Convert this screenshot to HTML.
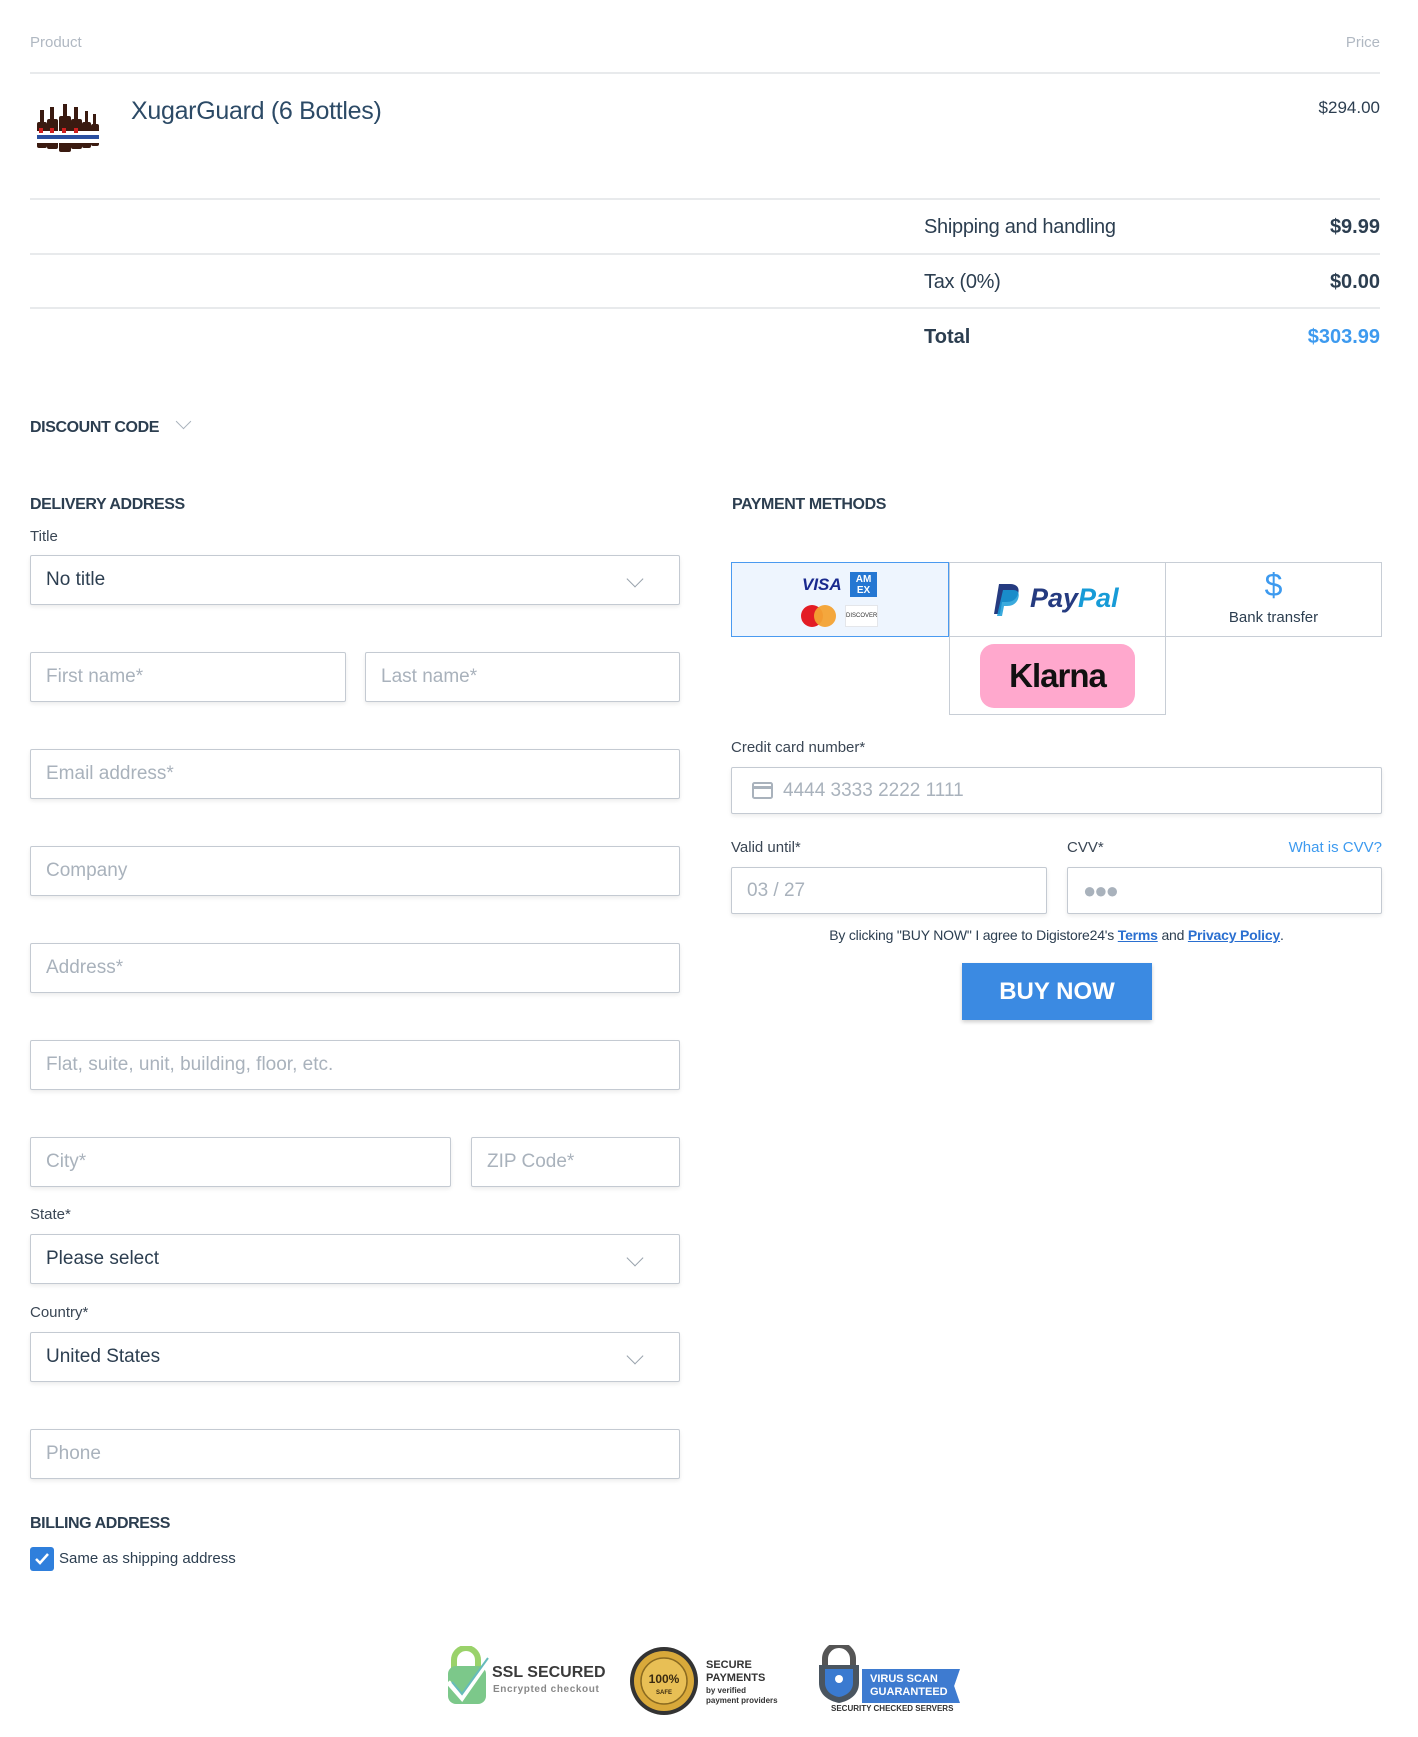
<!DOCTYPE html>
<html><head><meta charset="utf-8"><style>
*{box-sizing:border-box;margin:0;padding:0}
body{width:1418px;height:1737px;position:relative;background:#fff;font-family:"Liberation Sans",Arial,sans-serif;color:#2c3e50;overflow:hidden}
.a{position:absolute}
.hr{position:absolute;left:30px;width:1350px;height:2px;background:#e8eaec}
.h{font-weight:bold;font-size:16px;color:#2c3e50;letter-spacing:-0.4px}
.inp{position:absolute;height:50px;border:1px solid #c4cad2;border-radius:2px;box-shadow:0 2px 4px rgba(0,0,0,.08);font-size:19px;color:#a9b2bc;padding-left:15px;line-height:48px;background:#fff}
.sel{color:#2c3e50}
.chev{position:absolute;right:38px;top:17px;width:12px;height:12px;border-right:1.5px solid #9aa3ad;border-bottom:1.5px solid #9aa3ad;transform:rotate(45deg)}
.lbl{position:absolute;font-size:15px;color:#3a4654}
.tile{position:absolute;border:1px solid #c8ced6;background:#fff}
</style></head><body>
<div class="a" style="left:30px;top:34px;font-size:15px;color:#b0b8c2">Product</div>
<div class="a" style="right:38px;top:34px;font-size:15px;color:#b0b8c2">Price</div>
<div class="hr" style="top:72px"></div>
<svg class="a" style="left:35px;top:104px" width="66" height="54" viewBox="0 0 66 54">
<g fill="#3a1a10"><rect x="2" y="18" width="10" height="26" rx="2"/><rect x="12" y="15" width="11" height="30" rx="2"/><rect x="24" y="12" width="12" height="36" rx="2"/><rect x="36" y="15" width="11" height="30" rx="2"/><rect x="47" y="18" width="9" height="26" rx="2"/><rect x="56" y="20" width="8" height="22" rx="2"/>
<rect x="5" y="6" width="4" height="12"/><rect x="15" y="3" width="4" height="12"/><rect x="28" y="0" width="4" height="12"/><rect x="39" y="3" width="4" height="12"/><rect x="50" y="7" width="3" height="11"/><rect x="58" y="10" width="3" height="10"/></g>
<g fill="#fff"><rect x="2" y="27" width="62" height="12"/></g><g fill="#2a4fa0"><rect x="2" y="31" width="62" height="4"/></g><g fill="#d02020"><rect x="4" y="24" width="4" height="5"/><rect x="15" y="24" width="4" height="5"/><rect x="27" y="24" width="4" height="5"/><rect x="39" y="24" width="4" height="5"/></g></svg>
<div class="a" style="left:131px;top:97px;font-size:25px;color:#2c4a66;letter-spacing:-0.3px">XugarGuard (6 Bottles)</div>
<div class="a" style="right:38px;top:98px;font-size:17px;color:#2c3e50">$294.00</div>
<div class="hr" style="top:198px"></div>
<div class="a" style="left:924px;top:216px;font-size:20px;color:#2c3e50;letter-spacing:-0.3px">Shipping and handling</div>
<div class="a" style="right:38px;top:216px;font-size:20px;font-weight:bold">$9.99</div>
<div class="hr" style="top:253px"></div>
<div class="a" style="left:924px;top:271px;font-size:20px;letter-spacing:-0.3px">Tax (0%)</div>
<div class="a" style="right:38px;top:271px;font-size:20px;font-weight:bold">$0.00</div>
<div class="hr" style="top:307px"></div>
<div class="a" style="left:924px;top:326px;font-size:20px;font-weight:bold">Total</div>
<div class="a" style="right:38px;top:326px;font-size:20px;font-weight:bold;color:#3d9aef">$303.99</div>

<div class="a h" style="left:30px;top:419px">DISCOUNT CODE</div>
<div class="a" style="left:178px;top:416px;width:11px;height:11px;border-right:1.5px solid #a9b2bc;border-bottom:1.5px solid #a9b2bc;transform:rotate(45deg)"></div>

<div class="a h" style="left:30px;top:496px">DELIVERY ADDRESS</div>
<div class="lbl" style="left:30px;top:528px">Title</div>
<div class="inp sel" style="left:30px;top:555px;width:650px">No title<span class="chev"></span></div>
<div class="inp" style="left:30px;top:652px;width:316px">First name*</div>
<div class="inp" style="left:365px;top:652px;width:315px">Last name*</div>
<div class="inp" style="left:30px;top:749px;width:650px">Email address*</div>
<div class="inp" style="left:30px;top:846px;width:650px">Company</div>
<div class="inp" style="left:30px;top:943px;width:650px">Address*</div>
<div class="inp" style="left:30px;top:1040px;width:650px">Flat, suite, unit, building, floor, etc.</div>
<div class="inp" style="left:30px;top:1137px;width:421px">City*</div>
<div class="inp" style="left:471px;top:1137px;width:209px">ZIP Code*</div>
<div class="lbl" style="left:30px;top:1206px">State*</div>
<div class="inp sel" style="left:30px;top:1234px;width:650px">Please select<span class="chev"></span></div>
<div class="lbl" style="left:30px;top:1304px">Country*</div>
<div class="inp sel" style="left:30px;top:1332px;width:650px">United States<span class="chev"></span></div>
<div class="inp" style="left:30px;top:1429px;width:650px">Phone</div>
<div class="a h" style="left:30px;top:1515px">BILLING ADDRESS</div>
<div class="a" style="left:30px;top:1547px;width:24px;height:24px;background:#2f7fdc;border-radius:3px"><svg width="24" height="24"><path d="M6 12l4 4 8-9" stroke="#fff" stroke-width="2.5" fill="none"/></svg></div>
<div class="a" style="left:59px;top:1550px;font-size:15px;color:#2c3e50">Same as shipping address</div>

<div class="a h" style="left:732px;top:496px">PAYMENT METHODS</div>
<div class="tile" style="left:731px;top:562px;width:218px;height:75px;background:#eef5fe;border:1.5px solid #4a9af0">
<div class="a" style="left:70px;top:12px;font-style:italic;font-weight:bold;font-size:17px;color:#1a2a8f">VISA</div>
<div class="a" style="left:118px;top:9px;width:27px;height:25px;background:#2577d2;color:#fff;font-size:10px;line-height:11px;text-align:center;font-weight:bold;padding-top:2px">AM<br>EX</div>
<div class="a" style="left:69px;top:42px;width:22px;height:22px;border-radius:50%;background:#e31c24"></div>
<div class="a" style="left:82px;top:42px;width:22px;height:22px;border-radius:50%;background:#f3a233;opacity:.95"></div>
<div class="a" style="left:113px;top:42px;width:33px;height:22px;border:1px solid #e4e6ea;background:#fff;font-size:6px;line-height:20px;text-align:center;color:#333">DISCOVER</div>
</div>
<div class="tile" style="left:949px;top:562px;width:217px;height:75px">
<svg class="a" style="left:42px;top:19px" width="30" height="36" viewBox="0 0 30 36"><path d="M7 2h11c7 0 10 4 8 10-2 6-6 8-12 8h-4l-2 12H2z" fill="#253b80"/><path d="M11 8h10c5 0 7 3 5 9-2 5-6 7-11 7h-3l-2 10H5z" fill="#179bd7" opacity=".85"/></svg>
<div class="a" style="left:80px;top:20px;font-style:italic;font-weight:bold;font-size:27px;color:#253b80">Pay<span style="color:#179bd7">Pal</span></div>
</div>
<div class="tile" style="left:1165px;top:562px;width:217px;height:75px">
<div class="a" style="left:0;width:100%;top:4px;text-align:center;font-size:32px;color:#3d9aef">$</div>
<div class="a" style="left:0;width:100%;top:46px;text-align:center;font-size:15px;color:#2c3e50">Bank transfer</div>
</div>
<div class="tile" style="left:949px;top:636px;width:217px;height:79px">
<div class="a" style="left:30px;top:7px;width:155px;height:64px;border-radius:14px;background:#ffa8cd;text-align:center;line-height:64px;font-weight:bold;font-size:33px;color:#111;letter-spacing:-1px">Klarna</div>
</div>

<div class="lbl" style="left:731px;top:739px">Credit card number*</div>
<div class="inp" style="left:731px;top:767px;width:651px;height:47px;line-height:45px;padding-left:51px">4444 3333 2222 1111
<svg class="a" style="left:20px;top:14px" width="21" height="17"><rect x="1" y="1" width="19" height="15" rx="1.5" fill="none" stroke="#a9b2bc" stroke-width="2"/><rect x="1" y="4" width="19" height="3" fill="#a9b2bc"/></svg></div>
<div class="lbl" style="left:731px;top:839px">Valid until*</div>
<div class="lbl" style="left:1067px;top:839px">CVV*</div>
<div class="lbl" style="right:36px;top:839px;color:#3d9aef">What is CVV?</div>
<div class="inp" style="left:731px;top:867px;width:316px;height:47px;line-height:45px">03 / 27</div>
<div class="inp" style="left:1067px;top:867px;width:315px;height:47px;line-height:45px;font-size:22px;letter-spacing:-2px">●●●</div>
<div class="a" style="left:731px;width:651px;top:927px;text-align:center;font-size:14px;color:#2c3e50;letter-spacing:-0.2px">By clicking "BUY NOW" I agree to Digistore24's <u style="color:#2a6fd0;font-weight:bold">Terms</u> and <u style="color:#2a6fd0;font-weight:bold">Privacy Policy</u>.</div>
<div class="a" style="left:962px;top:963px;width:190px;height:57px;background:#3b8ae2;box-shadow:0 2px 4px rgba(0,0,0,.2);color:#fff;font-weight:bold;font-size:24px;text-align:center;line-height:57px">BUY NOW</div>

<svg class="a" style="left:444px;top:1646px" width="52" height="60" viewBox="0 0 52 60"><path d="M10 22V14a12 12 0 0 1 24 0v8" stroke="#9ad26a" stroke-width="6" fill="none"/><rect x="4" y="20" width="38" height="38" rx="8" fill="#7cc88a"/><path d="M4 36l14 16 28-40" stroke="#fff" stroke-width="5" fill="none"/><path d="M8 36l10 12 26-36" stroke="#6bb" stroke-width="2" fill="none"/></svg>
<div class="a" style="left:492px;top:1664px;font-weight:bold;font-size:16px;color:#3a3a3a">SSL SECURED</div>
<div class="a" style="left:493px;top:1684px;font-size:10px;color:#888;letter-spacing:.6px;font-weight:bold">Encrypted checkout</div>
<svg class="a" style="left:628px;top:1645px" width="72" height="72" viewBox="0 0 72 72"><circle cx="36" cy="36" r="34" fill="#333"/><circle cx="36" cy="36" r="30" fill="#d9a93a"/><circle cx="36" cy="36" r="23" fill="#e8bf55" stroke="#8a6a20" stroke-width="1.5"/><text x="36" y="38" text-anchor="middle" font-size="12" font-weight="bold" fill="#3a2a10" font-family="Liberation Sans">100%</text><text x="36" y="49" text-anchor="middle" font-size="6" font-weight="bold" fill="#3a2a10" font-family="Liberation Sans">SAFE</text></svg>
<div class="a" style="left:706px;top:1659px;font-size:11px;font-weight:bold;line-height:13px;color:#333">SECURE<br>PAYMENTS</div>
<div class="a" style="left:706px;top:1686px;font-size:8px;font-weight:bold;line-height:10px;color:#333">by verified<br>payment providers</div>
<svg class="a" style="left:815px;top:1645px" width="48" height="60" viewBox="0 0 48 60"><path d="M10 22V14a14 14 0 0 1 28 0v8" stroke="#555" stroke-width="6" fill="none"/><path d="M4 20h40v18c0 12-10 18-20 20C14 56 4 50 4 38z" fill="#4a5560"/><path d="M10 24h28v14c0 8-7 13-14 14-7-1-14-6-14-14z" fill="#3a7ad0"/><circle cx="24" cy="34" r="4" fill="#fff"/></svg>
<div class="a" style="left:862px;top:1669px;width:98px;height:34px;background:#3e7bd0;clip-path:polygon(0 0,100% 0,94% 50%,100% 100%,0 100%);color:#fff;font-weight:bold;font-size:11px;line-height:13px;padding:4px 0 0 8px">VIRUS SCAN<br>GUARANTEED</div>
<div class="a" style="left:831px;top:1704px;font-size:8px;font-weight:bold;color:#333">SECURITY CHECKED SERVERS</div>
</body></html>
